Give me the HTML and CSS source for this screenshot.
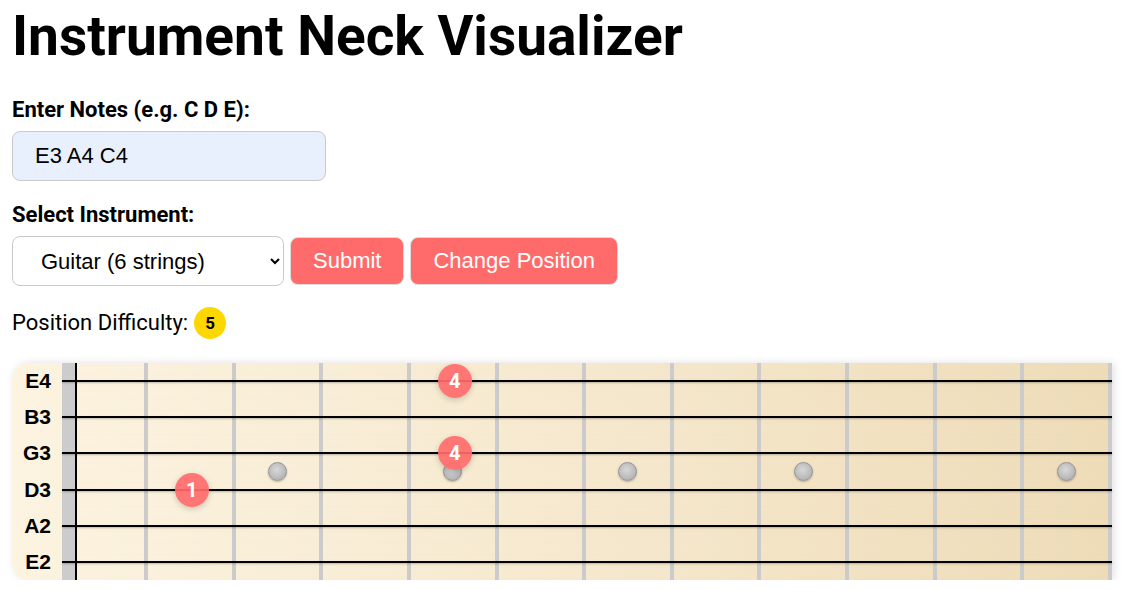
FILE: index.html
```html
<!DOCTYPE html>
<html lang="en">
<head>
<meta charset="utf-8">
<title>Instrument Neck Visualizer</title>
<link rel="stylesheet" href="styles.css">
</head>
<body>
<main class="app">
  <h1 class="title">Instrument Neck Visualizer</h1>

  <label class="field-label" for="notes">Enter Notes (e.g. C D E):</label>
  <input id="notes" class="notes-input" type="text" value="E3 A4 C4">

  <label class="field-label label-select" for="instrument">Select Instrument:</label>
  <div class="controls">
    <select id="instrument" class="instrument-select">
      <option>Guitar (6 strings)</option>
      <option>Bass (4 strings)</option>
      <option>Ukulele (4 strings)</option>
    </select>
    <button class="btn btn-submit" type="button">Submit</button>
    <button class="btn btn-change" type="button">Change Position</button>
  </div>

  <div class="difficulty">
    <span class="difficulty-text">Position Difficulty:</span>
    <span class="difficulty-badge">5</span>
  </div>

  <section class="fretboard">
    <div class="labels">
      <span class="string-label">E4</span>
      <span class="string-label">B3</span>
      <span class="string-label">G3</span>
      <span class="string-label">D3</span>
      <span class="string-label">A2</span>
      <span class="string-label">E2</span>
    </div>
    <div class="board">
      <div class="nut"></div>
      <div class="nut-line"></div>
      <div class="fret f1"></div>
      <div class="fret f2"></div>
      <div class="fret f3"><span class="inlay"></span></div>
      <div class="fret f4"></div>
      <div class="fret f5"><span class="inlay"></span></div>
      <div class="fret f6"></div>
      <div class="fret f7"><span class="inlay"></span></div>
      <div class="fret f8"></div>
      <div class="fret f9"><span class="inlay"></span></div>
      <div class="fret f10"></div>
      <div class="fret f11"></div>
      <div class="fret f12 last"><span class="inlay"></span></div>

      <div class="string s1"></div>
      <div class="string s2"></div>
      <div class="string s3"></div>
      <div class="string s4"></div>
      <div class="string s5"></div>
      <div class="string s6"></div>

      <span class="finger s1 at5">4</span>
      <span class="finger s3 at5">4</span>
      <span class="finger s4 at2">1</span>
    </div>
  </section>
</main>
</body>
</html>
```

FILE: styles.css
```css
* {
  box-sizing: border-box;
}

html, body {
  margin: 0;
  padding: 0;
  background: #ffffff;
}

body {
  font-family: Roboto, "Noto Sans", "Liberation Sans", sans-serif;
  color: #000;
}

.app {
  display: flex;
  flex-direction: column;
  align-items: flex-start;
  padding: 4px 13px 0 12px;
}

.title {
  margin: 0;
  font-size: 55px;
  line-height: 64px;
  font-weight: 700;
}

.field-label {
  margin-top: 30px;
  font-size: 22px;
  line-height: 24px;
  font-weight: 700;
}

.label-select {
  margin-top: 22px;
}

.notes-input {
  margin-top: 9px;
  width: 314px;
  height: 50px;
  padding: 0 22px;
  border: 1px solid #c9c9c9;
  border-radius: 8px;
  background: #e8f0fe;
  font-family: "Liberation Sans", Arial, sans-serif;
  font-size: 22px;
  color: #000;
  outline: none;
}

.controls {
  margin-top: 9px;
  display: flex;
  align-items: center;
  gap: 6px;
}

.instrument-select {
  width: 272px;
  height: 50px;
  padding: 0 11px 0 24px;
  border: 1px solid #c9c9c9;
  border-radius: 8px;
  background: #fff;
  font-family: "Liberation Sans", Arial, sans-serif;
  font-size: 22px;
  color: #000;
}

.btn {
  height: 48px;
  padding: 0 22px;
  border: 1px solid #dcdcdc;
  border-radius: 8px;
  background: #ff6b6b;
  color: #fff;
  font-family: "Liberation Sans", Arial, sans-serif;
  font-size: 22px;
}

.difficulty {
  margin-top: 21px;
  display: flex;
  align-items: center;
  gap: 6px;
  height: 32px;
}

.difficulty-text {
  font-size: 22px;
  line-height: 24px;
}

.difficulty-badge {
  width: 32px;
  height: 32px;
  border-radius: 50%;
  background: #ffd700;
  display: flex;
  align-items: center;
  justify-content: center;
  font-size: 17px;
  font-weight: 700;
}

/* Fretboard */
.fretboard {
  margin-top: 24px;
  width: 1100px;
  height: 217px;
  display: flex;
  border-radius: 16px 0 0 16px;
  background: linear-gradient(90deg, #fcf3e0 0%, #f6e9cf 50%, #eedcb8 100%);
  box-shadow: 2px 0 8px rgba(0, 0, 0, 0.12);
}

.labels {
  width: 50px;
  display: grid;
  grid-template-rows: repeat(6, 1fr);
  padding-right: 11px;
}

.string-label {
  display: flex;
  align-items: center;
  justify-content: flex-end;
  font-family: "Liberation Sans", Arial, sans-serif;
  font-size: 21px;
  font-weight: 700;
}

.board {
  flex: 1;
  display: grid;
  grid-template-columns: 13px 2px 71px repeat(11, 1fr);
  grid-template-rows: repeat(6, 1fr);
  background-image: repeating-linear-gradient(180deg, rgba(255, 255, 255, 0) 0px, rgba(255, 255, 255, 0) 11px, rgba(190, 160, 110, 0.05) 12px);
}

.nut {
  grid-column: 1;
  grid-row: 1 / -1;
  background: #cccccc;
}

.nut-line {
  grid-column: 2;
  grid-row: 1 / -1;
  background: #000;
}

.fret {
  grid-row: 1 / -1;
  border-right: 4px solid #cbcbcb;
  display: flex;
  align-items: center;
  justify-content: center;
}

.f1 { grid-column: 3; }
.f2 { grid-column: 4; }
.f3 { grid-column: 5; }
.f4 { grid-column: 6; }
.f5 { grid-column: 7; }
.f6 { grid-column: 8; }
.f7 { grid-column: 9; }
.f8 { grid-column: 10; }
.f9 { grid-column: 11; }
.f10 { grid-column: 12; }
.f11 { grid-column: 13; }
.f12 { grid-column: 14; }

.inlay {
  width: 19px;
  height: 19px;
  border-radius: 50%;
  background: radial-gradient(circle at 45% 40%, #d8d8d8 0%, #bdbdbd 55%, #a6a6a6 100%);
  border: 1px solid #949494;
  box-shadow: 0 1px 2px rgba(0, 0, 0, 0.25);
}

.string {
  grid-column: 1 / -1;
  display: flex;
  align-items: center;
}

.string::before {
  content: "";
  display: block;
  width: 100%;
  height: 2px;
  background: #000;
  box-shadow: 0 1px 2px rgba(0, 0, 0, 0.25);
}

.s1 { grid-row: 1; }
.s2 { grid-row: 2; }
.s3 { grid-row: 3; }
.s4 { grid-row: 4; }
.s5 { grid-row: 5; }
.s6 { grid-row: 6; }

.finger {
  align-self: center;
  justify-self: center;
  width: 34px;
  height: 34px;
  border-radius: 50%;
  background: rgba(255, 107, 107, 0.92);
  color: #fff;
  font-size: 20px;
  font-weight: 700;
  display: flex;
  align-items: center;
  justify-content: center;
  box-shadow: 0 2px 6px rgba(0, 0, 0, 0.18);
}

.at2 { grid-column: 4; }
.at5 { grid-column: 7; }
```
